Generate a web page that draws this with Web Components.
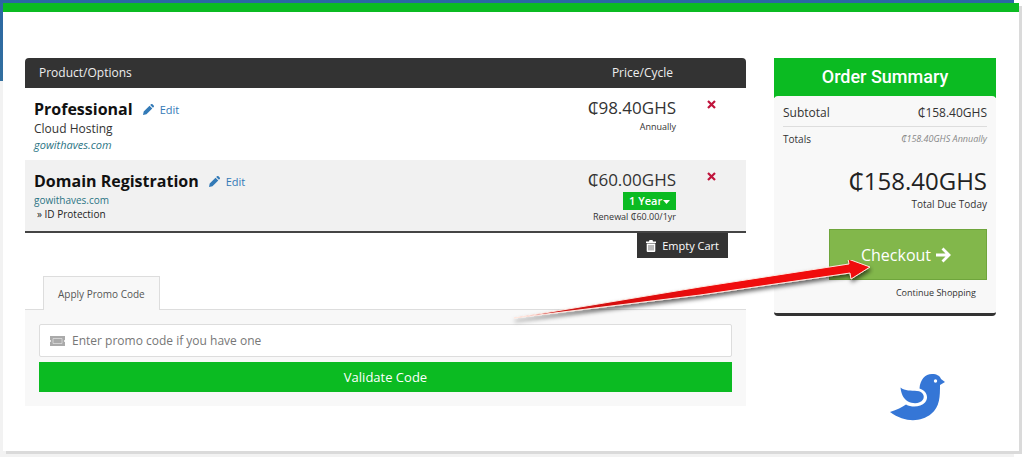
<!DOCTYPE html>
<html lang="en">
<head>
<meta charset="utf-8">
<meta name="viewport" content="width=device-width, initial-scale=1">
<title>Review &amp; Checkout</title>
<style>
html{background:#fff}
body{margin:0;font-family:"Open Sans","Noto Sans",sans-serif;font-size:13px;color:#333}
</style>
</head>
<body>
<cart-page>
  <cart-items slot="main"></cart-items>
  <promo-box slot="main"></promo-box>
  <order-summary slot="side"></order-summary>
  <bird-mark slot="side"></bird-mark>
</cart-page>

<script>
const define = (name, html) => customElements.define(name, class extends HTMLElement {
  constructor() {
    super();
    const t = document.createElement('template');
    t.innerHTML = html;
    this.attachShadow({ mode: 'open' }).append(t.content.cloneNode(true));
  }
});

define('cart-page', `
<style>
:host{display:block;padding:3px 5px 6px 3px;background:
  linear-gradient(#2b67a3,#326f9f) 0 0/calc(100% - 10px) 81px no-repeat,
  linear-gradient(#f2f2f2,#f2f2f2) 0 0/calc(100% - 10px) 100% no-repeat}
.card{position:relative;background:#fff;border-top:9px solid #0bbb22;box-shadow:3px 3px 0 #dadada;
  display:grid;grid-template-columns:minmax(0,1fr) 222px;column-gap:28px;padding:46px 23px 30px 22px}
.arrow{position:absolute;right:145px;top:248px;width:364px;height:72px;pointer-events:none}
</style>
<main class="card">
  <div><slot name="main"></slot></div>
  <aside><slot name="side"></slot></aside>
  <svg class="arrow" viewBox="510 260 364 72" aria-hidden="true">
    <defs><filter id="s" x="-5%" y="-20%" width="115%" height="160%"><feDropShadow dx="1" dy="3" stdDeviation="2" flood-color="#000" flood-opacity=".6"/></filter>
    <linearGradient id="g"><stop offset="0" stop-color="#c01818"/><stop offset=".6" stop-color="#f00808"/></linearGradient></defs>
    <path d="M514 318L700 287L849 264L848 259L870 267L851 279L850 273L700 295Z" fill="url(#g)" stroke="#ffe8e0" stroke-width="1" stroke-linejoin="round" filter="url(#s)"/>
  </svg>
</main>`);

define('edit-link', `
<style>
:host{display:inline-block;margin-left:10px}
a{display:inline-flex;align-items:center;gap:6px;font-size:11px;line-height:16px;color:#337ab7;text-decoration:none}
svg{width:11px;height:11px}
</style>
<a href="#edit"><svg viewBox="0 0 16 16" fill="currentColor" aria-hidden="true"><path d="M0 16l1-5L9.500 2.500l4 4L5 15zM10.500 1.500l1-1a1.700 1.700 0 0 1 2.400 0l1.600 1.600a1.700 1.700 0 0 1 0 2.400l-1 1z"/></svg><slot></slot></a>`);

define('remove-button', `
<style>
:host{display:block}
button{display:block;border:0;background:none;padding:0;cursor:pointer}
svg{display:block;width:9px;height:9px}
</style>
<button type="button" aria-label="Remove"><svg viewBox="0 0 9 9"><path d="M1 1l7 7m0-7l-7 7" stroke="#c0143c" stroke-width="2.200"/></svg></button>`);

define('cart-items', `
<style>
:host{display:block}
table{width:100%;border-collapse:separate;border-spacing:0;border-bottom:2px solid #444}
th{background:#333;color:#eee;font-weight:400;font-size:12px;line-height:18px;padding:6px 0;text-align:left}
th:first-child{border-radius:4px 0 0 0;padding-left:14px}
th:last-child{border-radius:0 4px 0 0;width:70px}
th.price{text-align:right;padding-right:3px;width:140px}
td{box-sizing:border-box;vertical-align:top;padding:9px 0 6px;height:72px}
td:first-child{padding-left:9px}
td.price{text-align:right;padding-top:8px}
td:last-child{padding:12px 0 0 31px}
tr.alt td{background:#f1f1f1;height:71px}
.name{display:flex;align-items:center;font-size:16px;font-weight:700;line-height:24px;color:#111}
.name edit-link{font-weight:400}
.group{font-size:12px;line-height:16px}
.site{display:block;font-size:11px;line-height:16px;color:#2b7484;text-decoration:none}
.alt .site{font-size:10px;line-height:14px}
.addon{font-size:10px;line-height:14px;padding-left:3px;color:#222}
.amount{font-size:17px;line-height:24px}
.cycle{font-size:9px;line-height:13px}
.term{position:relative;width:53px;height:18px;margin-left:auto}
select{display:block;appearance:none;border:0;margin:0;background:#0bbb22;color:#fff;font:600 11px/18px "Open Sans",sans-serif;height:18px;width:53px;padding:0 0 0 6px}
.term svg{position:absolute;right:6px;top:8px;width:7px;height:4px;pointer-events:none}
.foot{display:flex;justify-content:flex-end;padding-right:18px}
.empty{display:flex;align-items:center;gap:6px;height:25px;border:0;background:#333;color:#fff;font:11px/16px "Open Sans",sans-serif;padding:0 9px}
.empty svg{width:10px;height:12px}
</style>
<table>
  <thead><tr><th>Product/Options</th><th class="price">Price/Cycle</th><th></th></tr></thead>
  <tbody>
    <tr>
      <td><div class="name">Professional <edit-link>Edit</edit-link></div><div class="group">Cloud Hosting</div><a class="site" href="#site"><i>gowithaves.com</i></a></td>
      <td class="price"><div class="amount">₵98.40GHS</div><div class="cycle">Annually</div></td>
      <td><remove-button></remove-button></td>
    </tr>
    <tr class="alt">
      <td><div class="name">Domain Registration <edit-link>Edit</edit-link></div><a class="site" href="#site">gowithaves.com</a><div class="addon">» ID Protection</div></td>
      <td class="price"><div class="amount">₵60.00GHS</div><div class="term"><select aria-label="Registration term"><option>1 Year</option></select><svg viewBox="0 0 7 4"><path d="M0 0h7L3.500 4z" fill="#fff"/></svg></div><div class="cycle">Renewal ₵60.00/1yr</div></td>
      <td><remove-button></remove-button></td>
    </tr>
  </tbody>
</table>
<div class="foot"><button type="button" class="empty"><svg viewBox="0 0 10 12" aria-hidden="true"><path d="M0 1.500h3L3.500 0h3L7 1.500h3V3H0zM.7 3.600h8.600V11a1 1 0 0 1-1 1H1.700a1 1 0 0 1-1-1z" fill="#fff"/><path d="M3 5v5.500M5 5v5.500M7 5v5.500" stroke="#555" stroke-width=".8"/></svg>Empty Cart</button></div>`);

define('promo-box', `
<style>
:host{display:block;margin-top:18px}
.tabs{display:flex;padding-left:18px;border-bottom:1px solid #ddd}
.tab{box-sizing:border-box;height:34px;border:1px solid #ddd;border-bottom:0;background:#f8f8f8;margin-bottom:-1px;padding:0 14px;font:10px/32px "Open Sans",sans-serif;color:#555}
form{display:grid;gap:5px;background:#f8f8f8;padding:14px 14px}
.field{display:grid;align-items:center}
.field>*{grid-area:1/1}
input{box-sizing:border-box;width:100%;height:33px;border:1px solid #ddd;border-radius:2px;background:#fff;padding:0 12px 0 32px;font:12px "Open Sans",sans-serif;color:#555}
input::placeholder{color:#777;opacity:1}
.field svg{width:15px;height:10px;margin-left:11px;z-index:1;pointer-events:none}
.go{height:30px;border:0;background:#0bbb22;color:#fff;font:13px "Open Sans",sans-serif}
</style>
<div class="tabs" role="tablist"><button type="button" class="tab" role="tab" aria-selected="true">Apply Promo Code</button></div>
<form onsubmit="return false">
  <div class="field"><input type="text" aria-label="Promo code" placeholder="Enter promo code if you have one"><svg viewBox="0 0 15 10" aria-hidden="true"><path d="M0 0h15v4a1 1 0 0 0 0 2v4H0V6a1 1 0 0 0 0-2z" fill="#aaa"/><path d="M3 2.500h9v5H3z" fill="#aaa" stroke="#e4e4e4" stroke-width=".7"/></svg></div>
  <button class="go">Validate Code</button>
</form>`);

define('order-summary', `
<style>
:host{display:block;background:linear-gradient(#0bbb22,#0bbb22) 0 0/100% 40px no-repeat}
h2{margin:0;color:#fff;font:500 18px/38px Roboto,sans-serif;text-align:center}
.body{background:#f8f8f8;border-bottom:3px solid #333;border-radius:4px;padding:4px 9px 11px}
.row{display:flex;justify-content:space-between;align-items:center;font-size:12px;line-height:26px}
.row+.row{border-top:1px solid #ddd;font-size:10px;line-height:24px}
i{color:#888;font-size:9px}
.total{margin-top:15px;font-size:24px;line-height:30px;text-align:right;color:#222}
.due{font-size:10px;line-height:16px;text-align:right}
.checkout{display:flex;align-items:center;justify-content:center;gap:5px;box-sizing:border-box;width:158px;height:51px;margin:17px 0 0 auto;padding:0 8px 0 4px;border:1px solid #6fa53c;background:#82b74b;color:#fff;font:16px/24px "Open Sans",sans-serif}
.checkout svg{width:15px;height:16px}
.more{display:block;margin:4px 11px 0 0;text-align:right;font-size:9px;line-height:18px;color:#333;text-decoration:none}
</style>
<h2>Order Summary</h2>
<div class="body">
  <div class="row"><span>Subtotal</span><span>₵158.40GHS</span></div>
  <div class="row"><span>Totals</span><i>₵158.40GHS Annually</i></div>
  <div class="total">₵158.40GHS</div>
  <div class="due">Total Due Today</div>
  <button type="button" class="checkout">Checkout<svg viewBox="0 0 15 16" aria-hidden="true"><path d="M0 8h13M6.500 1.500L13 8l-6.500 6.500" fill="none" stroke="#fff" stroke-width="2.800"/></svg></button>
  <a class="more" href="#shop">Continue Shopping</a>
</div>`);

define('bird-mark', `
<style>
:host{display:block;margin-top:57px}
svg{display:block;width:56px;height:48px;margin-left:116px}
</style>
<svg viewBox="890 372 56 48" aria-hidden="true">
  <path d="M890 411C897 409 902 406 906 403.500C912 407 921 406 925 401.500C929 396.500 927 390 919.500 387.500C920 379 925 373 932 373C937 373 940 375 941 378L945 381L940 384C940 395 940 406 931 413C921 421 905 422 890 411Z" fill="#3576d6"/>
  <path d="M900.500 386.500C905 390 911 389.500 917 390C923 390.500 925 395 923 398.500C920 403 913 403 908 400.500C903 397.500 901 392 900.500 386.500Z" fill="#3576d6"/>
  <circle cx="935.500" cy="380" r="1.700" fill="#fff"/>
</svg>`);
</script>
</body>
</html>
